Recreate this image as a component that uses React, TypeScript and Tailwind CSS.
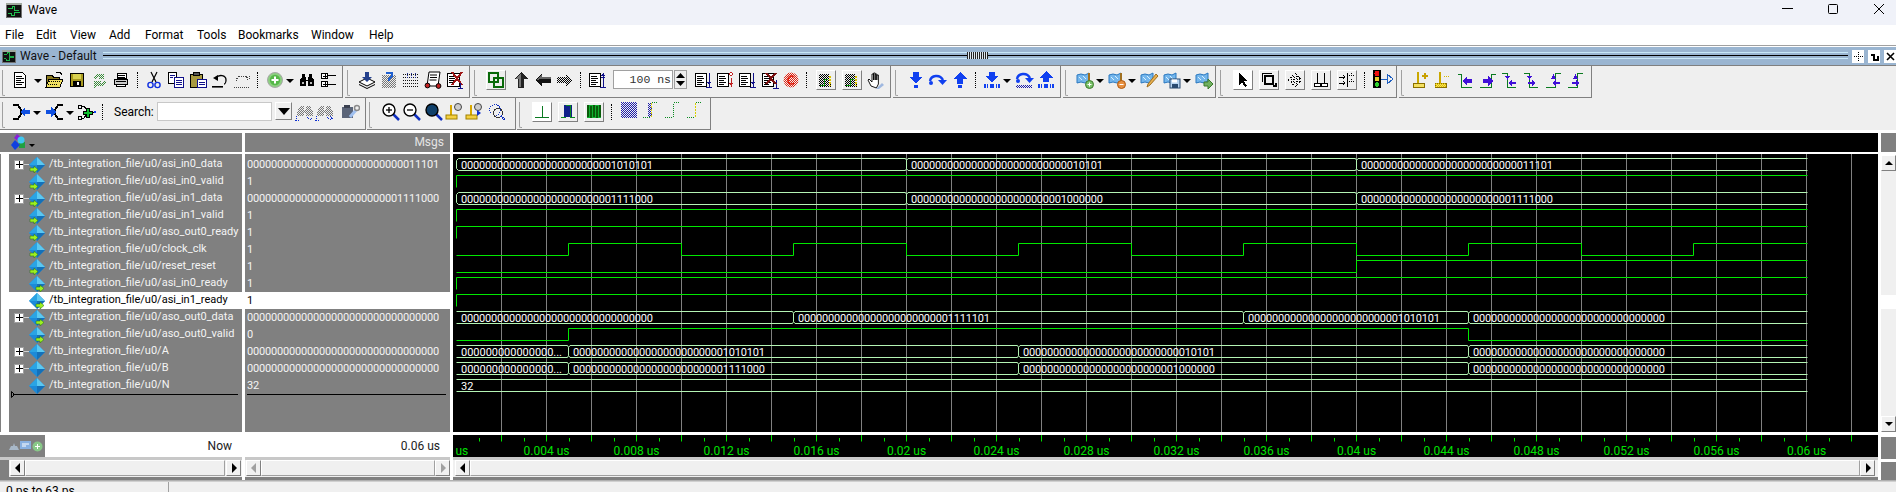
import React from "react";

const F = "font-['Roboto',sans-serif]";

function dith(id: string, c: string) {
  return (
    <pattern key={id} id={id} width="2" height="2" patternUnits="userSpaceOnUse">
      <rect width="1" height="1" fill={c} />
      <rect x="1" y="1" width="1" height="1" fill={c} />
    </pattern>
  );
}

const Defs = () => (
  <svg width="0" height="0" className="absolute">
    <defs>
      {dith("dk", "#000")}
      {dith("dgn", "#3a8a3a")}
      {dith("dgy", "#777")}
      {dith("dbl", "#1c1ca8")}
      {dith("dr", "#e02010")}
      {dith("dy", "#e0c000")}
      {dith("dgd", "#0a6a0a")}
    </defs>
  </svg>
);

const S = ({ children, w = 20, h = 20, crisp = true }: { children: React.ReactNode; w?: number; h?: number; crisp?: boolean }) => (
  <svg width={w} height={h} viewBox={`0 0 ${w} ${h}`} shapeRendering={crisp ? "crispEdges" : "geometricPrecision"} className="block shrink-0">
    {children}
  </svg>
);

const I = ({ c, children }: { c?: string; children: React.ReactNode }) => <div className={`shrink-0 ${c ?? ""}`}>{children}</div>;

const Dd = ({ c }: { c?: string }) => (
  <div className={`shrink-0 self-center mb-[6px] w-0 h-0 border-x-[4px] border-x-transparent border-t-[4px] border-t-black ${c ?? ""}`} />
);
const Sep = ({ c }: { c?: string }) => <div className={`shrink-0 h-[16px] mt-[2px] w-px border-l border-dotted border-black ${c ?? ""}`} />;
const Btn = ({ c, on, children }: { c?: string; on?: boolean; children: React.ReactNode }) => (
  <div className={`shrink-0 w-[20px] h-[20px] flex items-center justify-center border border-t-white border-l-white border-b-[#808080] border-r-[#808080] ${on ? "bg-white" : "bg-[#efefef]"} ${c ?? ""}`}>{children}</div>
);

/* ---- first toolbar icons ---- */
const New = () => (<S><path d="M4.5 2.5h8l3 3v12h-11z" fill="#fff" stroke="#000" /><path d="M6 6h6M6 8h8M6 10h5M6 12h8M6 14h6" stroke="#000" /></S>);
const Open = () => (<S><path d="M2.5 5.5h6l1 2h6v9h-13z" fill="#8a7a20" stroke="#000" /><path d="M2 17l3-8h14l-3 8z" fill="#f0e060" stroke="#000" /><path d="M5 11h11M4 14h10" stroke="url(#dk)" /><path d="M12 3l4-1 2 3" fill="none" stroke="#000" /></S>);
const Save = () => (<S><rect x="3.5" y="3.5" width="13" height="13" fill="#a89a20" stroke="#000" /><rect x="6" y="4" width="8" height="5" fill="#d8d050" /><rect x="6" y="11" width="8" height="5" fill="#000" /><rect x="10" y="12" width="2" height="3" fill="#fff" /></S>);
const Reload = () => (<S><path d="M3 8l4-4h6l2-2v7h-7l2-2H8l-2 2zM17 12l-4 4H7l-2 2v-7h7l-2 2h2l2-2z" fill="url(#dgn)" /></S>);
const Print = () => (<S><path d="M6.5 3.5h9v5h-9z" fill="#fff" stroke="#000" /><path d="M3.5 9.5h13v5h-13z" fill="#ccc" stroke="#000" /><path d="M5.5 14.5h9v2h-9z" fill="#fff" stroke="#000" /><path d="M7 5h7M7 7h7M5 11h10" stroke="#000" /></S>);
const Cut = () => (<S crisp={false}><path d="M7 2l5 10M13 2L8 12" stroke="#000" strokeWidth="1.2" fill="none" /><circle cx="6.5" cy="15" r="2.6" fill="none" stroke="#1030e0" strokeWidth="1.4" /><circle cx="13.5" cy="15" r="2.6" fill="none" stroke="#1030e0" strokeWidth="1.4" /></S>);
const Copy = () => (<S><path d="M2.5 2.5h8v11h-8z" fill="#fff" stroke="#000" /><path d="M8.5 7.5h9v10h-9z" fill="#fff" stroke="#10108a" /><path d="M4 5h5M4 7h3M10 10h6M10 12h6M10 14h6" stroke="#10108a" /></S>);
const Paste = () => (<S><path d="M2.5 4.5h12v13h-12z" fill="#a89a40" stroke="#000" /><path d="M5.5 2.5h6v3h-6z" fill="#555" stroke="#000" /><path d="M9.5 9.5h9v8h-9z" fill="#fff" stroke="#10108a" /><path d="M11 12h6M11 14h6" stroke="#10108a" /></S>);
const Undo = () => (<S crisp={false}><path d="M6 8c3-4 10-3 10 2 0 2-1 4-2 4" fill="none" stroke="#000" strokeWidth="1.3" /><path d="M3 8l5-3v6z" fill="#000" /><rect x="2" y="16" width="11" height="1.6" fill="#000" /></S>);
const Redo = () => (<S><path d="M4 11V8h2V6h7v1h2v1M14 6l3 3M17 6v3h-3M2 17h16" fill="none" stroke="#444" strokeDasharray="1 1" /></S>);
const Add = () => (<S crisp={false}><circle cx="10" cy="10" r="7.5" fill="#8ccf80" stroke="#a8a8a8" /><circle cx="10" cy="10" r="5.2" fill="#55b848" /><path d="M10 6.5v7M6.5 10h7" stroke="#fff" strokeWidth="2" /></S>);
const Bino = () => (<S><path d="M5 4h3v3h1v3h2V7h1V4h3v3l2 3v6h-6v-5H9v5H3v-6l2-3z" fill="#000" /><rect x="5" y="12" width="2" height="2" fill="#bbb" /><rect x="13" y="12" width="2" height="2" fill="#bbb" /></S>);
const Tree = () => (<S><rect x="3.5" y="3.5" width="6" height="5" fill="#fff" stroke="#000" /><rect x="3.5" y="11.5" width="6" height="5" fill="#fff" stroke="#000" /><path d="M5 6h4M7 4v4M5 14h4M7 12v4M10 5h8M10 14h8" stroke="#000" /></S>);

/* second toolbar */
const Stack = () => (<S crisp={false}><path d="M2 12l8-4 8 4-8 4z" fill="#fff" stroke="#000" /><path d="M2 14.5l8 4 8-4" fill="none" stroke="#000" /><path d="M8 2h4v5h3l-5 5-5-5h3z" fill="#24408c" /></S>);
const WaveQ = () => (<S><rect x="3" y="5" width="14" height="13" fill="url(#dgy)" /><path d="M7 3h6v3l-3 3v2" fill="none" stroke="#2060d0" strokeWidth="2" /></S>);
const DotGrid = () => (<S><path d="M2 4h16M2 7h16M2 10h16M2 13h16M2 16h16" stroke="#111" strokeDasharray="1 1" /><path d="M6 3v5M10 3v5M14 3v5" stroke="#2030a0" strokeDasharray="1 1" /></S>);
const Script = () => (<S crisp={false}><path d="M6 2h11l-2 14H4z" fill="#fff" stroke="#000" /><path d="M7 5h7M7 7.5h7M6.5 10h7" stroke="#000" /><circle cx="4.5" cy="15.5" r="2.4" fill="#c02020" stroke="#000" /><circle cx="15.5" cy="16" r="2.4" fill="#c02020" stroke="#000" /></S>);
const DelX = () => (<S><path d="M2.5 3.5h12v13h-12z" fill="#fff" stroke="#000" /><path d="M4 6h8M4 8h6M4 10h8M4 12h6" stroke="#000" /><path d="M7 2l10 13M17 2L7 15" stroke="#a01818" strokeWidth="2" /><path d="M15.5 13v6M13 18.5h5" stroke="#10108a" /></S>);

/* third toolbar */
const Chain = () => (<S w={18} h={18}><rect x="2" y="2" width="9" height="9" fill="none" stroke="#0a6a0a" strokeWidth="2" /><rect x="7" y="7" width="9" height="9" fill="none" stroke="#0a6a0a" strokeWidth="2" /></S>);
const Up = () => (<S><path d="M10 2l7 7h-4v9H7V9H3z" fill="#222" /><path d="M10 3L4 9h4v8h2z" fill="#777" /></S>);
const Left = () => (<S><path d="M2 10l7-6v3h9v6H9v3z" fill="#111" /><path d="M3 10l6-5v2h9v2H8z" fill="#666" /></S>);
const Right = () => (<S><path d="M18 10l-7-6v3H2v6h9v3z" fill="url(#dk)" /></S>);
const ListT = ({ kind }: { kind: "up" | "dn" | "flag" | "x" }) => (
  <S>
    <rect x="1.5" y="3.5" width="11" height="13" fill="#fff" stroke="#000" />
    <path d="M3 6h6M3 8h7M3 10h5M3 12h7M3 14h5" stroke="#000" />
    {kind === "up" && <path d="M15 3v14M13 5h4M14 4h2M13 7h4M12 17h6" stroke="#10108a" />}
    {kind === "dn" && <path d="M15 3v14M13 12h4M14 13h2M12 17h6" stroke="#10108a" />}
    {kind === "flag" && <path d="M15 8v9M13 13h4M14 14h2M15 2l2 2-2 2-2-2z" stroke="#c02020" fill="#fff" />}
    {kind === "x" && <path d="M15 10v8M12 18h6" stroke="#10108a" />}
    {kind === "x" && <path d="M5 3l10 11M15 3L5 14" stroke="#7a1010" strokeWidth="2" />}
  </S>
);
const RedC = () => (<S crisp={false}><circle cx="10" cy="10" r="7.5" fill="url(#dr)" /><path d="M13 7c-2-2-6-1-6 3s4 5 6 3" fill="none" stroke="#e02010" strokeWidth="1.6" /></S>);
const WaveBtn = () => (<S w={18} h={18}><path d="M2 3h10v8h2v5H2z" fill="url(#dk)" /><path d="M3 14h4V8h4" fill="none" stroke="#0a8a0a" /><path d="M13 5v10" stroke="#d8c000" strokeWidth="2" strokeDasharray="2 1" /></S>);
const Hand = () => (<S crisp={false}><path d="M6 16L3 10l1-1 3 3V4h1.6v6-7h1.6v7-6h1.6v6-5h1.6v9l-2 4z" fill="#fff" stroke="#000" strokeWidth="0.9" /><path d="M11 19l6-6 2 2-5 4z" fill="#9fb8e0" /></S>);

/* fourth toolbar */
const BlueA = ({ d }: { d: "dn" | "up" }) => (
  <S>
    {d === "dn" ? <path d="M7 2h6v5h4l-7 6-7-6h4z" fill="#1040f0" /> : <path d="M10 2l7 7h-4v5H7V9H3z" fill="#1040f0" />}
    <rect x="8" y="15" width="4" height="3" fill="#1040f0" />
  </S>
);
const BarA = ({ d }: { d: "dn" | "up" }) => (
  <S>
    {d === "dn" ? <path d="M7 2h6v4h4l-7 6-7-6h4z" fill="#1040f0" /> : <path d="M10 1l7 7h-4v4H7V8H3z" fill="#1040f0" />}
    <path d="M2 14h2v4H2zM5 14h1v4H5zM8 14h4v4H8zM14 14h1v4h-1zM16 14h2v4h-2z" fill="#1040f0" />
  </S>
);
const Over = () => (<S crisp={false}><path d="M3 11c1-6 10-7 13-1" fill="none" stroke="#1040f0" strokeWidth="2.4" /><path d="M11 10h9l-4.5 5z" fill="#1040f0" /><circle cx="4" cy="13" r="2" fill="#1040f0" /></S>);
const OverBar = () => (<S crisp={false}><path d="M3 9c1-6 10-7 13-1" fill="none" stroke="#1040f0" strokeWidth="2.4" /><path d="M11 8h9l-4.5 5z" fill="#1040f0" /><circle cx="4" cy="11" r="2" fill="#1040f0" /><path d="M2 15h16v3H2z" fill="url(#dbl)" /></S>);

/* fifth toolbar */
const Flag = ({ x }: { x: "add" | "rem" | "edit" | "save" | "go" }) => (
  <S crisp={false}>
    <path d="M2 5l4-1 4 1 4-2v8l-4 2-4-1-4 1z" fill="#74b6ec" stroke="#2a78c0" />
    <path d="M4 7l3 3M8 6l3 3" stroke="#d8f0ff" />
    {x === "add" && <><path d="M14 3v9" stroke="#a07020" strokeWidth="2" /><circle cx="14.5" cy="14.5" r="4" fill="#78c068" stroke="#3a7a2a" /><path d="M14.5 12.5v4M12.5 14.5h4" stroke="#fff" /></>}
    {x === "rem" && <><path d="M14 3v9" stroke="#a07020" strokeWidth="2" /><circle cx="14.5" cy="14.5" r="4" fill="#e89040" stroke="#b05a10" /><path d="M12.5 14.5h4" stroke="#fff" /></>}
    {x === "edit" && <path d="M17 4l2 2-8 9-3 2 1-3z" fill="#e8b050" stroke="#a07020" />}
    {x === "save" && <><rect x="8" y="9" width="10" height="9" fill="#b8d4f0" stroke="#2a4a70" /><rect x="10" y="9.5" width="5" height="3" fill="#fff" /><rect x="10" y="14" width="6" height="4" fill="#2a4a70" /></>}
    {x === "go" && <path d="M10 12h4V9l5 5-5 5v-3h-4z" fill="#70b060" stroke="#3a7a2a" />}
  </S>
);

/* sixth toolbar */
const Ptr = () => (<S w={16} h={16}><path d="M4 1v12l3-3 3 5 2-1-3-5h4z" fill="#000" /></S>);
const ZoomBox = () => (<S w={16} h={16}><path d="M1.5 10V1.5H11" fill="none" stroke="#000" /><rect x="4" y="4" width="8" height="8" fill="none" stroke="#000" strokeWidth="2" /><path d="M12 14h3v-3" stroke="#000" fill="none" strokeWidth="2" /></S>);
const Move = () => (<S w={16} h={16}><path d="M8 1l3 3H9v3h3V5l3 3-3 3V9H9v3h2l-3 3-3-3h2V9H4v2L1 8l3-3v2h3V4H5z" fill="none" stroke="#000" strokeDasharray="1 1" /></S>);
const Cursors = () => (<S w={16} h={16}><path d="M4.5 1v10M11.5 1v10" stroke="#000" /><rect x="1.5" y="11.5" width="6" height="3" fill="#fff" stroke="#000" /><rect x="8.5" y="11.5" width="6" height="3" fill="#fff" stroke="#000" /></S>);
const Split = () => (<S w={16} h={16}><path d="M8 1v14M0 5h6M0 11h6M4 3l2 2-2 2M4 9l2 2-2 2" fill="none" stroke="#000" /><path d="M10 3h5M12 1v4M10 9h5M12 7v4" stroke="#000" strokeDasharray="1 1" /></S>);
const Light = () => (<S w={24} h={20}><rect x="1" y="0" width="8" height="18" fill="#000" /><circle cx="5" cy="3.5" r="2.5" fill="#f01010" /><circle cx="5" cy="9" r="2.2" fill="#e8d030" /><circle cx="5" cy="14.5" r="2.2" fill="#30d030" /><path d="M9 9h6M15 4l6 5-6 5z" fill="none" stroke="#2060c0" /></S>);

/* seventh toolbar */
const Cur = ({ s }: { s: "add" | "rem" }) => (
  <S>
    <path d="M7 2v12" stroke="#caa800" strokeWidth="2" />
    <rect x="2" y="13" width="11" height="4" fill="#f4e060" stroke="#8a7000" />
    {s === "add" ? <path d="M11 6h6M14 3v6" stroke="#c8a000" strokeWidth="1.4" /> : <path d="M11 6h6" stroke="#d8b800" strokeDasharray="1 1" />}
    {s === "rem" && <rect x="2" y="13" width="11" height="4" fill="url(#dy)" />}
  </S>
);
const Edge = ({ f, a }: { f: "hl" | "lh"; a: "l" | "r" }) => (
  <S>
    <path d={f === "hl" ? "M2 4.5h3.5v13H16" : "M2 17.5h11.5v-13H18"} fill="none" stroke="#0a7a20" />
    <path d={a === "l" ? "M6 11l5-5v3h5v4h-5v3z" : "M15 11l-5-5v3H5v4h5v3z"} fill="#4010d8" />
  </S>
);
const Edge2 = ({ f, a }: { f: "hl" | "lh"; a: "l" | "r" }) => (
  <S>
    <path d={f === "hl" ? "M2 3.5h5.5v14H16" : "M2 17.5h9.5v-14H17"} fill="none" stroke="#0a7a20" />
    <path d={f === "hl" ? "M5 6h5l-2.5 4z" : "M7 9h5L9.5 4z"} fill="#4010d8" />
    <path d={a === "l" ? "M8 13l4-3v2h4v2h-4v2z" : "M14 13l-4-3v2H6v2h4v2z"} fill="#4010d8" />
  </S>
);

/* second row */
const Merge = ({ r }: { r?: boolean }) => (
  <S>
    {r ? (
      <><path d="M19 3h-5l-3 5v4l3 5h5" fill="none" stroke="#000" strokeWidth="2" /><path d="M2 8h5V5l5 5-5 5v-3H2z" fill="#1050e0" /></>
    ) : (
      <><path d="M1 3h5l3 5v4l-3 5H1" fill="none" stroke="#000" strokeWidth="2" /><path d="M18 8h-5V5l-5 5 5 5v-3h5z" fill="#1050e0" /></>
    )}
  </S>
);
const Mux = () => (<S><rect x="1" y="3" width="3" height="3" fill="none" stroke="#000" /><rect x="1" y="14" width="3" height="3" fill="none" stroke="#000" /><path d="M4 4h3l2 3M4 16h3l2-3M15 10h3" fill="none" stroke="#000" /><path d="M6 9h3V6h3v3h3v3h-3v3H9v-3H6z" fill="#10c030" stroke="#000" /><rect x="17" y="9" width="2" height="2" fill="#1040f0" /></S>);
const Find = ({ b }: { b?: boolean }) => (
  <S>
    <path d="M5 4h4v4h2V4h4l3 6v4h-7v-3H9v3H2v-4z" fill="url(#dgy)" />
    <path d="M2 14l-1 4h4M12 15l3 3 3-3" fill="none" stroke="#1030d0" strokeDasharray="1 1" />
    {b && <path d="M15 14l3 3" stroke="#1030d0" />}
  </S>
);
const Tools = () => (<S crisp={false}><rect x="2" y="5" width="11" height="11" fill="#5a6478" /><rect x="4" y="3" width="6" height="3" fill="#3a4050" /><path d="M10 15l6-7" stroke="#a0c0f0" strokeWidth="3" /><circle cx="17" cy="6" r="2.5" fill="none" stroke="#8a8a8a" strokeWidth="1.5" /></S>);
const Zoom = ({ k }: { k: "in" | "out" | "full" }) => (
  <S crisp={false}>
    <path d="M12 12l6 6" stroke="#1030c0" strokeWidth="2.5" />
    <circle cx="8" cy="8" r="6" fill={k === "full" ? "#10406a" : "#fff"} stroke="#000" strokeWidth="1.4" />
    {k !== "full" && <path d="M5 8h6" stroke="#000" strokeWidth="1.3" />}
    {k === "in" && <path d="M8 5v6" stroke="#000" strokeWidth="1.3" />}
  </S>
);
const ZoomCur = ({ b }: { b?: boolean }) => (
  <S crisp={false}>
    <path d="M6 3v11" stroke="#d8a800" strokeWidth="2" />
    <rect x="1" y="13" width="11" height="4" fill="#f4d040" stroke="#a08000" />
    <circle cx="13" cy="5" r="3.5" fill="#ccc" stroke="#444" />
    {b && <path d="M12 8v6l4-3z" fill="#1030d0" />}
  </S>
);
const ZoomDot = () => (<S><circle cx="8" cy="8" r="5.5" fill="none" stroke="#1030c0" strokeDasharray="1 1" /><circle cx="11" cy="11" r="4.5" fill="none" stroke="#333" /><path d="M14 14l4 4" stroke="#1030c0" strokeWidth="1.5" strokeDasharray="1 1" /></S>);
const WPulse = () => (<S w={16} h={16}><path d="M8 2v11M1 13.5h14" stroke="#0a7a20" /></S>);
const WBlock = () => (<S w={16} h={16}><rect x="4" y="1" width="8" height="12" fill="#10208a" /><path d="M6 1.5h4v12M1 13.5h5" fill="none" stroke="#0a8a20" /><path d="M10 13.5h5" stroke="#0a8a20" /></S>);
const WFull = () => (<S w={16} h={16}><rect x="1" y="1" width="14" height="13" fill="#0a5a0a" /><path d="M1 13.5h2v-12h3v12h3v-12h3v12h3" fill="none" stroke="#10b030" /></S>);
const WDith = () => (<S w={16} h={16}><rect x="0" y="0" width="16" height="16" fill="url(#dbl)" /></S>);
const Stp = ({ y, dith: d }: { y?: boolean; dith?: boolean }) => (
  <S w={16} h={16}>
    {d && <rect x="5" y="1" width="4" height="14" fill="url(#dbl)" />}
    <path d="M0 15.5h8" stroke="#0a8a20" strokeDasharray="1 1" />
    <path d="M8.5 15V1" stroke={y ? "#d8d000" : "#0a8a20"} strokeDasharray={y ? "2 1" : "1 1"} />
    <path d="M9 0.5h6" stroke="#0a8a20" strokeDasharray="1 1" />
  </S>
);

const Sec = ({ w, children }: { w: string; children: React.ReactNode }) => (
  <div className={`${w} h-full flex items-start pt-[4px] shrink-0 border-r border-b border-[#808080] bg-[#efefef]`}>
    <div className="shrink-0 w-[3px] h-[26px] ml-[2px] border-l border-b border-[#a0a0a0] rounded-bl-[2px]" />
    {children}
  </div>
);

/* ---- data ---- */
const Z32 = "0".repeat(32);
const b = (s: string) => s.padStart(32, "0");
const rows: { n: string; v: string; k: "in" | "out" | "int"; p?: boolean; sel?: boolean }[] = [
  { n: "/tb_integration_file/u0/asi_in0_data", v: b("11101"), k: "in", p: true },
  { n: "/tb_integration_file/u0/asi_in0_valid", v: "1", k: "in" },
  { n: "/tb_integration_file/u0/asi_in1_data", v: b("1111000"), k: "in", p: true },
  { n: "/tb_integration_file/u0/asi_in1_valid", v: "1", k: "in" },
  { n: "/tb_integration_file/u0/aso_out0_ready", v: "1", k: "in" },
  { n: "/tb_integration_file/u0/clock_clk", v: "1", k: "in" },
  { n: "/tb_integration_file/u0/reset_reset", v: "1", k: "in" },
  { n: "/tb_integration_file/u0/asi_in0_ready", v: "1", k: "out" },
  { n: "/tb_integration_file/u0/asi_in1_ready", v: "1", k: "out", sel: true },
  { n: "/tb_integration_file/u0/aso_out0_data", v: Z32, k: "out", p: true },
  { n: "/tb_integration_file/u0/aso_out0_valid", v: "0", k: "out" },
  { n: "/tb_integration_file/u0/A", v: Z32, k: "int", p: true },
  { n: "/tb_integration_file/u0/B", v: Z32, k: "int", p: true },
  { n: "/tb_integration_file/u0/N", v: "32", k: "int" },
];

const SigIcon = ({ k }: { k: "in" | "out" | "int" }) => (
  <svg width="16" height="16" viewBox="0 0 16 16" className="block shrink-0">
    <path d="M8 0l8 8-8 8-8-8z" fill="#1c8ad8" />
    <path d="M8 0l8 8H8z" fill="#5cc8f0" />
    <path d="M8 0L0 8h8z" fill="#2aa4e4" />
    <path d="M8 16l8-8H8z" fill="#1470b8" />
    {k === "in" && <path d="M1 11h4V9l4 3.5L5 16v-2H1z" fill="#9cf020" stroke="#206a10" strokeWidth=".5" />}
    {k === "out" && <path d="M7 11h4V9l4 3.5-4 3.5v-2H7z" fill="#9cf020" stroke="#206a10" strokeWidth=".5" />}
  </svg>
);

const x = (t: number) => Math.floor(456.3 + 22.5 * t) + 0.5;
const END = 1807.5;
const top = (i: number) => 158.5 + 17 * i;
const low = (i: number) => 170.5 + 17 * i;

const Bus = ({ i, segs, bracket }: { i: number; segs: [number, string][]; bracket?: boolean }) => {
  const t = top(i);
  const l = low(i);
  let d = "";
  segs.forEach((s, j) => {
    const a = x(s[0]);
    const e = j + 1 < segs.length ? x(segs[j + 1][0]) : END;
    const a2 = j === 0 ? (bracket ? a + 2 : a) : a + 1.5;
    const e2 = j + 1 < segs.length ? e - 1 : e;
    d += `M${a2} ${t}H${e2}M${a2} ${l}H${e2}`;
    if (j === 0) {
      if (bracket) d += `M${a + 2} ${t}L${a} ${t + 2}V${l - 2}L${a + 2} ${l}`;
    } else {
      d += `M${a - 1} ${t}L${a} ${t + 2}V${l - 2}L${a - 1} ${l}M${a + 1.5} ${t}L${a} ${t + 2}M${a} ${l - 2}L${a + 1.5} ${l}`;
    }
  });
  return (
    <g>
      <path d={d} fill="none" stroke="#b4f4b4" strokeWidth="1" />
      {segs.map((s, j) => (
        <text key={j} x={x(s[0]) + 4.5} y={t + 10.5} fill="#fff" fontSize="11" textLength={s[1].length === 32 ? 192 : s[1].length > 4 ? 101 : undefined} lengthAdjust="spacing" className={F}>
          {s[1]}
        </text>
      ))}
    </g>
  );
};

const Logic = ({ i, d0, tr }: { i: number; d0: 0 | 1; tr: number[] }) => {
  const t = top(i);
  const l = low(i);
  let v = d0;
  let d = `M456.5 ${v ? t : l}`;
  tr.forEach((tm) => {
    const px = x(tm);
    d += `H${px}`;
    v = v ? 0 : 1;
    d += `V${v ? t : l}`;
  });
  d += `H${END}`;
  return <path d={d} fill="none" stroke="#00e800" strokeWidth="1" />;
};

const Rising = ({ i }: { i: number }) => (
  <path d={`M456.5 ${low(i)}V${top(i)}H${END}`} fill="none" stroke="#00e800" strokeWidth="1" />
);

const clockTr = Array.from({ length: 11 }, (_, k) => 5 + 5 * k);
const grid = Array.from({ length: 31 }, (_, k) => 501.5 + 45 * k);
const minors = Array.from({ length: 31 }, (_, k) => 479.5 + 45 * k);
const labels = ["0.004", "0.008", "0.012", "0.016", "0.02", "0.024", "0.028", "0.032", "0.036", "0.04", "0.044", "0.048", "0.052", "0.056", "0.06"];

const ScrollBtn = ({ dir, off, c }: { dir: "l" | "r" | "u" | "d"; off?: boolean; c?: string }) => {
  const col = off ? "#a0a0a0" : "#000";
  return (
    <div className={`shrink-0 w-[15px] h-[16px] bg-[#f0f0f0] border border-t-white border-l-white border-b-[#808080] border-r-[#808080] flex items-center justify-center ${c ?? ""}`}>
      <svg width="8" height="10" viewBox="0 0 8 10">
        {dir === "l" && <path d="M6 0v10L1 5z" fill={col} />}
        {dir === "r" && <path d="M2 0v10l5-5z" fill={col} />}
        {dir === "u" && <path d="M0 7h8L4 3z" fill={col} />}
        {dir === "d" && <path d="M0 3h8L4 7z" fill={col} />}
      </svg>
    </div>
  );
};

const Thumb = () => <div className="flex-1 h-[16px] bg-[#f0f0f0] border border-t-white border-l-white border-b-[#a0a0a0] border-r-[#a0a0a0]" />;

const TitleIcon = () => (
  <svg width="16" height="15" viewBox="0 0 16 15" shapeRendering="crispEdges" className="block shrink-0">
    <rect width="16" height="15" fill="#707070" />
    <rect x="1" y="1" width="14" height="13" fill="#101010" />
    <path d="M2 5h4V3h2v4h5M2 10h3v2h3V9h6" fill="none" stroke="#20c050" />
    <rect x="0" y="0" width="16" height="2" fill="#a0a8a0" />
  </svg>
);

const menu: [string, string][] = [["File", "ml-[5px]"], ["Edit", "w-[34px]"], ["View", "w-[39px]"], ["Add", "w-[36px]"], ["Format", "w-[52px]"], ["Tools", "w-[41px]"], ["Bookmarks", "w-[73px]"], ["Window", "w-[58px]"], ["Help", "w-[30px]"]];

export default function App() {
  return (
    <div className={`w-[1896px] h-[492px] overflow-hidden flex flex-col bg-[#f0f0f0] text-[12px] ${F}`}>
      <Defs />
      {/* title bar */}
      <div className="h-[25px] shrink-0 bg-[#f0f2f9] flex items-center">
        <div className="ml-[6px] -mt-[4px]"><TitleIcon /></div>
        <span className="ml-[6px] -mt-[5px] text-[12px] text-black">Wave</span>
        <div className="ml-auto flex items-center -mt-[7px]">
          <svg width="11" height="2" className="mr-[35px]"><rect width="11" height="1" fill="#000" /></svg>
          <svg width="10" height="10" className="mr-[36px]"><rect x=".5" y=".5" width="9" height="9" rx="1" fill="none" stroke="#000" /></svg>
          <svg width="10" height="10" className="mr-[12px]"><path d="M0 0l10 10M10 0L0 10" stroke="#000" /></svg>
        </div>
      </div>
      {/* menu */}
      <div className="h-[20px] shrink-0 bg-white flex items-center text-black">
        <span className="ml-[5px] w-[31px]">File</span>
        {menu.slice(1).map(([m, c]) => (<span key={m} className={c}>{m}</span>))}
      </div>
      <div className="h-[2px] shrink-0 border-t border-[#a0a0a0] bg-white" />
      {/* dock header */}
      <div className="h-[19px] shrink-0 bg-[#9ab5d1] border-b border-[#808080] flex items-center">
        <div className="ml-[1px] scale-90"><TitleIcon /></div>
        <span className="ml-[3px] text-[12px] text-[#111]">Wave - Default</span>
        <div className="ml-[6px] flex-1 h-[7px] border-y border-[#c8e8f8] flex flex-col justify-center -mt-[1px] relative">
          <div className="h-px bg-black" />
          <div className="absolute left-[864px] -top-[1px] w-[21px] h-[7px] bg-[repeating-linear-gradient(90deg,#222_0_1px,#dfe8f0_1px_2px)]" />
        </div>
        <div className="flex items-center ml-[4px] gap-[4px]">
          <div className="w-[12px] h-[13px] bg-white flex items-center justify-center"><svg width="9" height="9"><path d="M4.5 0v9M0 4.5h9" stroke="#000" strokeDasharray="1 1" /></svg></div>
          <div className="w-[12px] h-[13px] bg-white flex items-center justify-center"><svg width="9" height="9"><path d="M1 3h3v5h4V4" fill="none" stroke="#000" strokeWidth="2" /></svg></div>
          <div className="w-[12px] h-[13px] bg-white flex items-center justify-center"><svg width="9" height="9"><path d="M1 1l7 7M8 1L1 8" stroke="#000" strokeWidth="1.6" /></svg></div>
        </div>
      </div>
      {/* toolbar row 1 */}
      <div className="h-[32px] shrink-0 flex gap-[2px] bg-[#efefef]">
        <Sec w="w-[343px]">
          <I c="ml-[5px]"><New /></I><Dd c="ml-[4px]" /><I c="ml-[2px]"><Open /></I><I c="ml-[3px]"><Save /></I><I c="ml-[2px]"><Reload /></I><I c="ml-[2px]"><Print /></I>
          <Sep c="ml-[6px]" /><I c="ml-[6px]"><Cut /></I><I c="ml-[2px]"><Copy /></I><I c="ml-[2px]"><Paste /></I><I c="ml-[2px]"><Undo /></I><I c="ml-[2px]"><Redo /></I>
          <Sep c="ml-[5px]" /><I c="ml-[7px]"><Add /></I><Dd c="ml-[1px]" /><I c="ml-[3px]"><Bino /></I><I c="ml-[1px]"><Tree /></I>
        </Sec>
        <Sec w="w-[125px]">
          <I c="ml-[7px]"><Stack /></I><I c="ml-[2px]"><WaveQ /></I><I c="ml-[2px]"><DotGrid /></I><I c="ml-[2px]"><Script /></I><I c="ml-[2px]"><DelX /></I>
        </Sec>
        <Sec w="w-[419px]">
          <Btn c="ml-[9px]"><Chain /></Btn><I c="ml-[5px]"><Up /></I><I c="ml-[2px]"><Left /></I><I c="ml-[2px]"><Right /></I><Sep c="ml-[5px]" />
          <I c="ml-[7px]"><ListT kind="up" /></I>
          <div className="ml-[5px] w-[60px] h-[19px] bg-white border border-[#a0a0a0] text-right pr-[1px] font-['Liberation_Mono',monospace] text-[11.5px] leading-[18px] text-[#333]">100 ns</div>
          <div className="ml-[1px] w-[13px] h-[19px] flex flex-col items-center justify-around bg-[#efefef] border border-[#a0a0a0]">
            <svg width="9" height="5"><path d="M0 5h9L4.5 0z" /></svg>
            <svg width="9" height="5"><path d="M0 0h9L4.5 5z" /></svg>
          </div>
          <I c="ml-[7px]"><ListT kind="dn" /></I><I c="ml-[2px]"><ListT kind="flag" /></I><I c="ml-[2px]"><ListT kind="dn" /></I><I c="ml-[3px]"><ListT kind="x" /></I><I><RedC /></I>
          <Sep c="ml-[5px]" /><Btn c="ml-[9px]"><WaveBtn /></Btn><Btn c="ml-[6px]"><WaveBtn /></Btn><I c="ml-[3px]"><Hand /></I>
        </Sec>
        <Sec w="w-[168px]">
          <I c="ml-[8px]"><BlueA d="dn" /></I><I c="ml-[1px]"><Over /></I><I c="ml-[3px]"><BlueA d="up" /></I><Sep c="ml-[5px]" />
          <I c="ml-[6px]"><BarA d="dn" /></I><Dd c="ml-[1px]" /><I c="ml-[3px]"><OverBar /></I><I c="ml-[2px]"><BarA d="up" /></I>
        </Sec>
        <Sec w="w-[153px]">
          <I c="ml-[7px]"><Flag x="add" /></I><Dd c="ml-[1px]" /><I c="ml-[3px]"><Flag x="rem" /></I><Dd c="ml-[1px]" /><I c="ml-[3px]"><Flag x="edit" /></I><I c="ml-[3px]"><Flag x="save" /></I><Dd c="ml-[1px]" /><I c="ml-[3px]"><Flag x="go" /></I>
        </Sec>
        <Sec w="w-[179px]">
          <Btn c="ml-[10px]" on><Ptr /></Btn><Btn c="ml-[6px]"><ZoomBox /></Btn><Btn c="ml-[6px]"><Move /></Btn><Btn c="ml-[6px]"><Cursors /></Btn><Btn c="ml-[6px]"><Split /></Btn><Sep c="ml-[7px]" /><I c="ml-[7px]"><Light /></I>
        </Sec>
        <Sec w="w-[193px]">
          <I c="ml-[7px]"><Cur s="add" /></I><I c="ml-[2px]"><Cur s="rem" /></I><I c="ml-[3px]"><Edge f="hl" a="l" /></I><I c="ml-[2px]"><Edge f="lh" a="r" /></I><I c="ml-[2px]"><Edge2 f="hl" a="l" /></I><I c="ml-[2px]"><Edge2 f="hl" a="r" /></I><I c="ml-[2px]"><Edge2 f="lh" a="l" /></I><I c="ml-[2px]"><Edge2 f="lh" a="r" /></I>
        </Sec>
      </div>
      {/* toolbar row 2 */}
      <div className="h-[32px] shrink-0 flex gap-[1px] bg-[#efefef]">
        <Sec w="w-[366px]">
          <I c="ml-[7px]"><Merge /></I><Dd c="ml-[1px]" /><I c="ml-[3px]"><Merge r /></I><Dd c="ml-[2px]" /><I c="ml-[3px]"><Mux /></I><Sep c="ml-[5px]" />
          <span className="ml-[11px] w-[36px] mt-[1px] text-[12px] leading-[18px] text-black">Search:</span>
          <div className="ml-[7px] w-[115px] h-[19px] bg-white border border-[#c8c8c8]" />
          <div className="ml-[3px] w-[17px] h-[18px] bg-[#efefef] border border-t-white border-l-white border-b-[#808080] border-r-[#808080] flex items-center justify-center"><svg width="12" height="7"><path d="M0 0h12L6 7z" /></svg></div>
          <I c="ml-[3px]"><Find /></I><I><Find b /></I><I c="ml-[5px]"><Tools /></I>
        </Sec>
        <Sec w="w-[149px]">
          <I c="ml-[9px]"><Zoom k="in" /></I><I c="ml-[1px]"><Zoom k="out" /></I><I c="ml-[2px]"><Zoom k="full" /></I><I c="ml-[1px]"><ZoomCur /></I><I><ZoomCur b /></I><I c="ml-[2px]"><ZoomDot /></I>
        </Sec>
        <Sec w="w-[194px]">
          <Btn c="ml-[10px]" on><WPulse /></Btn><Btn c="ml-[6px]"><WBlock /></Btn><Btn c="ml-[6px]"><WFull /></Btn><Sep c="ml-[7px]" />
          <I c="ml-[9px]"><WDith /></I><I c="ml-[6px]"><Stp dith y /></I><I c="ml-[6px]"><Stp /></I><I c="ml-[6px]"><Stp y /></I>
        </Sec>
        <div className="flex-1" />
      </div>
      {/* main */}
      <div className="h-[351px] shrink-0 flex bg-white border-b border-[#b0b0b0]">
        {/* name column */}
        <div className="w-[242px] shrink-0 flex flex-col">
          <div className="h-[3px] bg-white" />
          <div className="h-[19px] bg-[#808080] flex items-center pl-[11px] gap-[2px]">
            <svg width="16" height="16" viewBox="0 0 16 16" className="block -mt-[2px]"><path d="M6 0l5 4-3 4-5-4z" fill="#8a20d8" /><rect x="8" y="8" width="6" height="6" fill="#20a040" /><path d="M4 6l5 5-5 5-4-5z" fill="#1040e0" /><circle cx="10" cy="6" r="3.5" fill="#40c8f0" /></svg>
            <div className="w-0 h-0 mt-[5px] border-x-[3px] border-x-transparent border-t-[3px] border-t-black" />
          </div>
          <div className="h-[2px] bg-white" />
          <div className="h-[278px] flex border-l border-[#808080] bg-white">
            <div className="w-[8px] shrink-0 bg-white" />
            <div className="flex-1 min-w-0 bg-[#808080] pt-[2px]">
              {rows.map((r) => (
                <div key={r.n} className={`h-[17px] flex items-center text-[11px] ${r.sel ? "bg-white text-black" : "text-[#f4f4f4]"}`}>
                  {r.p ? (
                    <div className="ml-[5px] w-[10px] h-[10px] shrink-0 bg-white border border-[#a0a0a0] flex items-center justify-center">
                      <svg width="7" height="7"><path d="M3.5 0v7M0 3.5h7" stroke="#000" /></svg>
                    </div>
                  ) : (
                    <div className="ml-[5px] w-[10px] shrink-0" />
                  )}
                  <div className={`w-[5px] shrink-0 ${r.p ? "h-px bg-[#d0d0d0]" : ""}`} />
                  <SigIcon k={r.k} />
                  <span className="ml-[4px] whitespace-nowrap">{r.n}</span>
                </div>
              ))}
              <div className="h-px bg-black ml-[4px] mr-[4px] relative">
                <svg width="4" height="7" className="absolute -left-[2px] -top-[3px]"><path d="M.5.5v6l3-3z" fill="none" stroke="#000" /></svg>
              </div>
            </div>
          </div>
          <div className="h-[3px] bg-white" />
          <div className="h-[22px] flex bg-white">
            <div className="w-[45px] bg-[#808080] flex items-center gap-[1px] pl-[9px]">
              <svg width="10" height="9"><path d="M0 8l2-4h6l2 4zM4 4l1-3 1 3" fill="#a8b8c8" /></svg>
              <svg width="11" height="10"><rect width="11" height="8" fill="#88b0e0" /><path d="M2 3h7M2 5h4" stroke="#fff" /></svg>
              <svg width="11" height="11"><circle cx="5.5" cy="5.5" r="5" fill="#88c888" /><path d="M5.5 3v5M3 5.5h5" stroke="#fff" /></svg>
            </div>
            <span className="ml-auto mr-[10px] text-[12px] leading-[22px] text-[#222]">Now</span>
          </div>
          <div className="h-[3px] bg-[#c8c8c8]" />
          <div className="h-[17px] flex bg-[#f0f0f0]">
            <div className="w-[9px] bg-[#808080]" />
            <ScrollBtn dir="l" c="ml-[1px]" />
            <Thumb />
            <ScrollBtn dir="r" c="ml-[1px] mr-[1px]" />
          </div>
          <div className="flex-1 bg-[#808080]" />
        </div>
        <div className="w-[3px] shrink-0 bg-white" />
        {/* value column */}
        <div className="w-[205px] shrink-0 flex flex-col">
          <div className="h-[3px] bg-white" />
          <div className="h-[19px] bg-[#808080] text-right pr-[6px] text-[12px] leading-[19px] text-[#e4e4e4]">Msgs</div>
          <div className="h-[2px] bg-white" />
          <div className="h-[278px] bg-[#808080] pt-[2px]">
            {rows.map((r) => (
              <div key={r.n} className={`h-[17px] pl-[2px] text-[11px] leading-[17px] ${r.sel ? "bg-white text-black" : "text-[#f4f4f4]"}`}>
                <span className="whitespace-nowrap tracking-[-0.18px]">{r.v}</span>
              </div>
            ))}
            <div className="h-px bg-black ml-[2px] mr-[4px]" />
          </div>
          <div className="h-[3px] bg-white" />
          <div className="h-[22px] bg-white text-right pr-[10px] text-[12px] leading-[22px] text-[#222]">0.06 us</div>
          <div className="h-[3px] bg-[#c8c8c8]" />
          <div className="h-[17px] flex bg-[#f0f0f0]">
            <ScrollBtn dir="l" off c="ml-[1px]" />
            <Thumb />
            <ScrollBtn dir="r" off />
          </div>
          <div className="flex-1 bg-[#808080]" />
        </div>
        <div className="w-[3px] shrink-0 bg-white" />
        {/* wave column */}
        <div className="w-[1425px] shrink-0 flex flex-col">
          <div className="h-[3px] bg-white" />
          <div className="h-[19px] bg-black" />
          <div className="h-[2px] bg-white" />
          <svg width="1425" height="278" viewBox="453 154 1425 278" className="block bg-black shrink-0">
            {grid.map((g) => (<path key={g} d={`M${g} 154V432`} stroke="#808080" />))}
            <Bus i={0} bracket segs={[[0, b("1010101")], [20, b("10101")], [40, b("11101")]]} />
            <Rising i={1} />
            <Bus i={2} bracket segs={[[0, b("1111000")], [20, b("1000000")], [40, b("1111000")]]} />
            <Rising i={3} />
            <Rising i={4} />
            <Logic i={5} d0={0} tr={clockTr} />
            <Logic i={6} d0={0} tr={[40]} />
            <Rising i={7} />
            <Rising i={8} />
            <Bus i={9} segs={[[0, Z32], [15, b("1111101")], [35, b("1010101")], [45, Z32]]} />
            <Logic i={10} d0={0} tr={[5, 45]} />
            <Bus i={11} segs={[[0, "000000000000000..."], [5, b("1010101")], [25, b("10101")], [45, Z32]]} />
            <Bus i={12} segs={[[0, "000000000000000..."], [5, b("1111000")], [25, b("1000000")], [45, Z32]]} />
            <Bus i={13} segs={[[0, "32"]]} />
          </svg>
          <div className="h-[3px] bg-white" />
          <svg width="1425" height="22" viewBox="453 435 1425 22" className="block bg-black shrink-0">
            {grid.map((g) => (<path key={g} d={`M${g} 435V441.5`} stroke="#00e000" />))}
            {minors.map((g) => (<path key={g} d={`M${g} 438V441.5`} stroke="#00e000" />))}
            <text x="457" y="455" fontSize="12" fill="#00e000" textAnchor="middle" className={F}>0 us</text>
            {labels.map((l, k) => (
              <text key={l} x={546.5 + 90 * k} y="455" fontSize="12" fill="#00e000" textAnchor="middle" className={F}>{l} us</text>
            ))}
          </svg>
          <div className="h-[3px] bg-[#c8c8c8]" />
          <div className="h-[17px] flex bg-[#f0f0f0] pl-[2px] pr-[3px]">
            <ScrollBtn dir="l" />
            <Thumb />
            <ScrollBtn dir="r" />
          </div>
          <div className="flex-1 bg-[#808080]" />
        </div>
        <div className="w-[3px] shrink-0 bg-white" />
        {/* vertical scrollbar */}
        <div className="flex-1 flex flex-col bg-white">
          <div className="h-[3px]" />
          <div className="h-[19px] bg-[#808080]" />
          <div className="h-[3px]" />
          <ScrollBtn dir="u" c="w-full" />
          <div className="h-[245px] bg-[#f0f0f0] flex flex-col">
            <div className="h-[124px]" />
            <div className="h-[14px] bg-white" />
          </div>
          <ScrollBtn dir="d" c="w-full" />
          <div className="h-[5px]" />
          <div className="h-[22px] bg-[#808080]" />
          <div className="h-[3px]" />
          <div className="flex-1 bg-[#808080]" />
        </div>
      </div>
      {/* status */}
      <div className="flex-1 flex bg-[#f0f0f0] text-[12px] text-black overflow-hidden border-t border-[#d0d0d0]">
        <div className="w-[169px] pl-[6px] border-r border-[#a0a0a0] leading-[14px] pt-[2px] shrink-0">0 ps to 63 ps</div>
      </div>
    </div>
  );
}
